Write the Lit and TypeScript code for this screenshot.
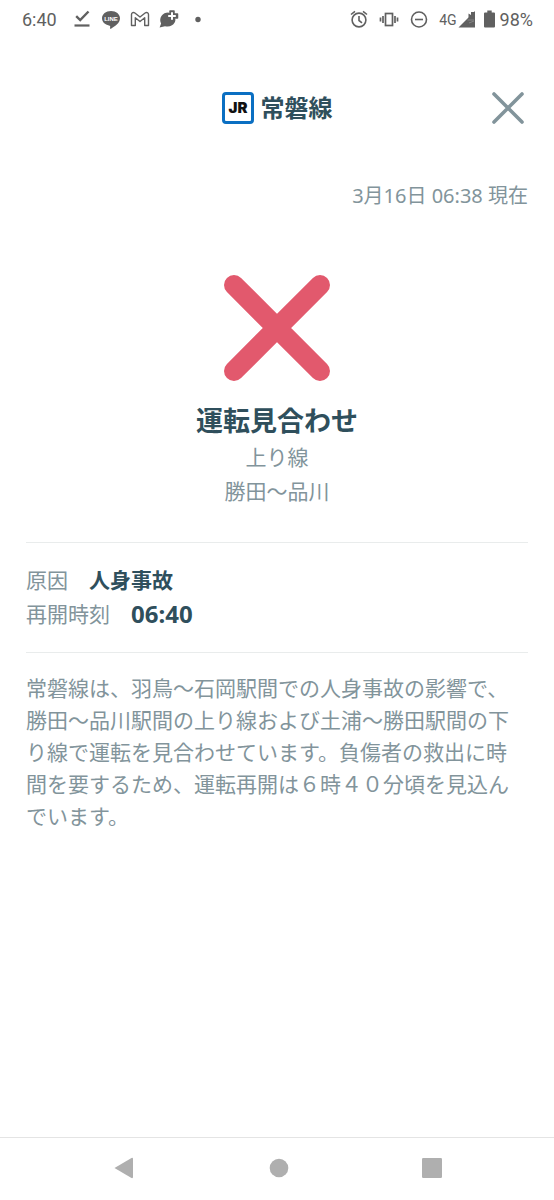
import { LitElement, html, css, svg } from "lit";
import { customElement, state } from "lit/decorators.js";

@customElement("status-bar")
class StatusBar extends LitElement {
  static styles = css`
    :host {
      display: flex;
      justify-content: space-between;
      align-items: center;
      height: 40px;
      padding: 0 21px 0 22px;
      color: #606060;
      font: 18px/24px Roboto, sans-serif;
    }
    .group {
      display: flex;
      align-items: center;
    }
    .left {
      gap: 9px;
    }
    .right {
      gap: 10px;
    }
    svg {
      display: block;
      width: 20px;
      height: 20px;
    }
    .clock {
      margin-right: 6px;
    }
    .signal,
    .power {
      display: flex;
      align-items: center;
    }
    .net {
      font-size: 14px;
    }
    .signal {
      gap: 1px;
    }
    .signal svg {
      width: 18px;
    }
    .power {
      gap: 5px;
      margin-left: -2px;
    }
    .power svg {
      width: 11px;
    }
    .line-name {
      font: 700 6px "Liberation Sans", sans-serif;
      fill: #fff;
    }
  `;

  render() {
    return html`
      <div class="group left">
        <span class="clock">6:40</span>
        <svg viewBox="0 0 20 20" aria-hidden="true">
          <path d="M4.2 6.200 8.2 10 16.5 1.500" fill="none" stroke="currentColor" stroke-width="2.4" />
          <path d="M2.500 15.5H17.500" stroke="currentColor" stroke-width="2.200" />
        </svg>
        <svg viewBox="0 0 20 20">
          <path
            d="M10 1C4.900 1 1 4.200 1 8.300c0 3.700 3 6.400 7 7.100 1 .2 1.300.6 1.200 1.400l-.2 1.500c0 .6.500.7 1 .4 3.500-2 9-5.500 9-10.400C19 4.200 15.100 1 10 1Z"
            fill="currentColor"
          />
          <text class="line-name" x="10" y="10.500" text-anchor="middle">LINE</text>
        </svg>
        <svg viewBox="0 0 20 20" aria-hidden="true">
          <path
            d="M1.500 15.500V4.500C1.500 2.600 3.500 1.900 4.900 3L10 7 15.100 3C16.500 1.900 18.500 2.600 18.500 4.500V15.500H14.700V7.800L10 11.500 5.300 7.800V15.500Z"
            fill="none"
            stroke="currentColor"
            stroke-width="1.400"
            stroke-linejoin="round"
          />
        </svg>
        <svg viewBox="0 0 20 20" aria-hidden="true">
          <path
            d="M9.500 2.500A8 7.600 0 0 0 2.100 13.600L.6 17.600 6 16.200A8 7.600 0 0 0 16.500 9.500Z"
            fill="currentColor"
          />
          <path
            d="M11 1H15V4H18.500V8H15V11.500H11V8H8V4H11Z"
            fill="currentColor"
            stroke="currentColor"
            stroke-width="1.500"
            stroke-linejoin="round"
          />
          <path d="M13 2.200V9.800M9.200 6H16.800" stroke="#fff" stroke-width="2" />
        </svg>
        <svg viewBox="0 0 20 20" aria-hidden="true">
          <circle cx="10" cy="9.500" r="2.700" fill="currentColor" />
        </svg>
      </div>
      <div class="group right">
        <svg viewBox="0 0 20 20" aria-hidden="true">
          <g fill="none" stroke="currentColor" stroke-width="1.600">
            <circle cx="10" cy="10" r="6.900" />
            <path d="M10 6V10.500L13 12.800M2 4.500 6 1.300M18 4.500 14 1.300" />
          </g>
        </svg>
        <svg viewBox="0 0 20 20" aria-hidden="true">
          <g fill="none" stroke="currentColor" stroke-width="1.700">
            <rect x="6.500" y="3.500" width="7" height="12" />
            <path d="M4 6V13M1.500 7.500V11.500M16 6V13M18.500 7.500V11.500" />
          </g>
        </svg>
        <svg viewBox="0 0 20 20" aria-hidden="true">
          <g fill="none" stroke="currentColor" stroke-width="1.600">
            <circle cx="10" cy="9.500" r="7.500" />
            <path d="M6 9.500H14" />
          </g>
        </svg>
        <span class="signal">
          <span class="net">4G</span>
          <svg viewBox="0 0 18 20" aria-hidden="true">
            <path d="M.5 17.500 17 1V17.500Z" fill="currentColor" />
            <path d="M10.500 8V3.500L13 5V2H17" fill="currentColor" />
            <path d="M9.500 10H16M11 13 16 11" stroke="#858585" />
          </svg>
        </span>
        <span class="power">
          <svg viewBox="0 0 11 20" aria-hidden="true">
            <path d="M3.300.5H7.700V2.500H10Q11 2.500 11 3.500V16.500Q11 17.500 10 17.500H1Q0 17.500 0 16.500V3.500Q0 2.500 1 2.500H3.300Z" fill="currentColor" />
          </svg>
          <span>98%</span>
        </span>
      </div>
    `;
  }
}

@customElement("nav-bar")
class NavBar extends LitElement {
  static styles = css`
    :host {
      display: grid;
      grid-template-columns: repeat(3, 1fr);
      justify-items: center;
      align-items: center;
      height: 60px;
      padding: 0 46px 2px 48px;
      border-top: 1px solid #e4e4e4;
    }
    button {
      border: 0;
      padding: 10px;
      background: none;
    }
    svg {
      display: block;
      width: 22px;
      height: 22px;
      fill: #afafaf;
    }
  `;

  private keys = [
    { label: "戻る", shape: svg`<path d="M.5 11 17.500 1Q19 .4 19 2V20Q19 21.600 17.500 21Z" />` },
    { label: "ホーム", shape: svg`<circle cx="12" cy="11" r="9.300" />` },
    { label: "履歴", shape: svg`<rect x="2" y="1" width="20" height="20" rx="1.200" />` },
  ];

  render() {
    return this.keys.map(
      (k) => html`<button aria-label=${k.label}><svg viewBox="0 0 22 22">${k.shape}</svg></button>`
    );
  }
}

@customElement("app-root")
class AppRoot extends LitElement {
  static styles = css`
    :host {
      display: flex;
      flex-direction: column;
      min-height: 100vh;
      background: #fff;
      color: #82949b;
      font: 21px/34px "Noto Sans", "Noto Sans CJK JP", sans-serif;
    }
    main {
      flex: 1;
      padding: 0 26px;
    }
    header {
      display: grid;
      grid-template-columns: 1fr auto 1fr;
      align-items: center;
      height: 40px;
      margin-top: 48px;
    }
    .title {
      grid-column: 2;
      display: flex;
      align-items: center;
      gap: 7px;
      margin: 0;
      font-size: 24px;
      color: #2f4f5c;
    }
    .logo {
      display: block;
      width: 32px;
      height: 32px;
    }
    .logo text {
      font: 900 15px Inter, sans-serif;
      fill: #111;
    }
    .close {
      justify-self: end;
      border: 0;
      padding: 0;
      margin-right: 2px;
      background: none;
    }
    .close svg {
      display: block;
      width: 36px;
      height: 36px;
    }
    .stamp {
      margin: 51px 0 0;
      font-size: 20px;
      text-align: right;
    }
    .summary {
      padding: 62px 0 34px;
      text-align: center;
      border-bottom: 1px solid #e9ecec;
    }
    .summary p {
      margin: 0;
    }
    .mark {
      display: block;
      width: 106px;
      height: 106px;
      margin: 0 auto 21px;
    }
    h2 {
      margin: 0;
      font-size: 27px;
      line-height: 38px;
      color: #2f4f5c;
    }
    .facts {
      margin: 0;
      padding: 20px 0 21px;
      border-bottom: 1px solid #e9ecec;
    }
    .fact {
      display: flex;
      gap: 21px;
    }
    .fact dd {
      margin: 0;
      font-weight: 700;
      color: #2f4f5c;
    }
    .time {
      font-size: 24px;
    }
    .detail {
      margin: 19px 0 0;
      padding-right: 12px;
      line-height: 32px;
    }
  `;

  @state() private facts = [
    { name: "原因", value: "人身事故", cls: "" },
    { name: "再開時刻", value: "06:40", cls: "time" },
  ];

  render() {
    return html`
      <status-bar></status-bar>
      <main>
        <header>
          <h1 class="title">
            <svg class="logo" viewBox="0 0 32 32">
              <rect x="1.500" y="1.500" width="29" height="29" rx="2.500" fill="#fff" stroke="#0b6fc2" stroke-width="3" />
              <text x="16" y="21" text-anchor="middle">JR</text>
            </svg>
            常磐線
          </h1>
          <button class="close" aria-label="閉じる">
            <svg viewBox="0 0 36 36">
              <path d="M4 4 32 32M32 4 4 32" stroke="#82949b" stroke-width="3.600" stroke-linecap="round" />
            </svg>
          </button>
        </header>
        <p class="stamp">3月16日 06:38 現在</p>
        <section class="summary">
          <svg class="mark" viewBox="0 0 106 106" aria-hidden="true">
            <path d="M10 10 96 96M96 10 10 96" stroke="#e2596d" stroke-width="20" stroke-linecap="round" />
          </svg>
          <h2>運転見合わせ</h2>
          <p>上り線</p>
          <p>勝田〜品川</p>
        </section>
        <dl class="facts">
          ${this.facts.map(
            (f) => html`<div class="fact">
              <dt>${f.name}</dt>
              <dd class=${f.cls}>${f.value}</dd>
            </div>`
          )}
        </dl>
        <p class="detail">
          常磐線は、羽鳥〜石岡駅間での人身事故の影響で、勝田〜品川駅間の上り線および土浦〜勝田駅間の下り線で運転を見合わせています。負傷者の救出に時間を要するため、運転再開は６時４０分頃を見込んでいます。
        </p>
      </main>
      <nav-bar></nav-bar>
    `;
  }
}
